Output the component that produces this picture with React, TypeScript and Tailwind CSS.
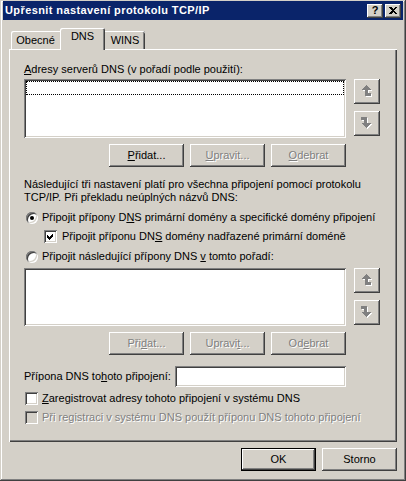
import React from 'react';
import clsx from 'clsx';

const raised = 'shadow-[inset_-1px_-1px_0_#404040,inset_1px_1px_0_#ffffff,inset_-2px_-2px_0_#808080]';
const sunken = 'shadow-[inset_1px_1px_0_#808080,inset_-1px_-1px_0_#ffffff,inset_2px_2px_0_#404040,inset_-2px_-2px_0_#d4d0c8]';
const disabledText = 'text-[#808080] [text-shadow:1px_1px_0_#ffffff]';

const Btn: React.FC<{ children: React.ReactNode; disabled?: boolean; isDefault?: boolean }> = ({
  children,
  disabled,
  isDefault,
}) => (
  <div
    className={clsx(
      'flex items-center justify-center w-[75px] h-[23px] bg-[#d4d0c8]',
      raised,
      isDefault && 'border border-black',
      disabled ? disabledText : 'text-black'
    )}
  >
    <span>{children}</span>
  </div>
);

const upPts = '5,0 10,5 7,5 7,8 10,8 10,11 4,11 4,5 0,5';
const downPts = '5,11 0,6 3,6 3,3 0,3 0,0 6,0 6,6 10,6';

const ArrowBtn: React.FC<{ down?: boolean }> = ({ down }) => (
  <div className={clsx('w-[26px] h-[25px] bg-[#d4d0c8] flex items-center justify-center', raised)}>
    <svg width="12" height="13" viewBox="0 0 12 13" shapeRendering="crispEdges">
      <polygon points={down ? downPts : upPts} fill="#ffffff" transform="translate(1 1)" />
      <polygon points={down ? downPts : upPts} fill="#808080" />
    </svg>
  </div>
);

const ListBox: React.FC<{ h: string; focus?: boolean }> = ({ h, focus }) => (
  <div className={clsx('w-[322px] bg-white p-[2px]', sunken, h)}>
    {focus && <div className="h-[14px] border border-dotted border-black" />}
  </div>
);

const Radio: React.FC<{ checked?: boolean }> = ({ checked }) => (
  <div className={clsx('w-[12px] h-[12px] rounded-full bg-white flex items-center justify-center', sunken)}>
    {checked && <div className="w-[4px] h-[4px] rounded-full bg-black" />}
  </div>
);

const Check: React.FC<{ checked?: boolean; disabled?: boolean }> = ({ checked, disabled }) => (
  <div
    className={clsx(
      'w-[13px] h-[13px] flex items-center justify-center',
      sunken,
      disabled ? 'bg-[#d4d0c8]' : 'bg-white'
    )}
  >
    {checked && (
      <svg width="7" height="7" viewBox="0 0 7 7" shapeRendering="crispEdges">
        <polygon points="0,2 2,4 6,0 6,3 2,7 0,5" fill="#000000" />
      </svg>
    )}
  </div>
);

const App: React.FC = () => {
  return (
    <div className="w-[406px] h-[481px] overflow-hidden bg-[#d4d0c8] pt-[1px] px-[3px] font-['Liberation_Sans',Arial,sans-serif] text-[11px] leading-[13px] text-black shadow-[inset_-1px_-1px_0_#404040,inset_1px_1px_0_#d4d0c8,inset_-2px_-2px_0_#808080,inset_2px_2px_0_#ffffff]">
      {/* title bar */}
      <div className="h-[19px] bg-[#0a246a] flex items-center pl-[2px] pr-[2px]">
        <span className="text-white font-bold tracking-[0.4px] whitespace-nowrap">Upřesnit nastavení protokolu TCP/IP</span>
        <div className="ml-auto flex gap-[2px]">
          <div className={clsx('w-[16px] h-[14px] bg-[#d4d0c8] flex items-center justify-center font-bold text-[11px]', raised)}>
            <span className="leading-[11px] -mt-[1px]">?</span>
          </div>
          <div className={clsx('w-[16px] h-[14px] bg-[#d4d0c8] flex items-center justify-center', raised)}>
            <svg width="8" height="7" viewBox="0 0 8 7" shapeRendering="crispEdges">
              <path d="M0 0h2l2 2 2-2h2L5 3.5 8 7H6L4 5 2 7H0l3-3.5z" fill="#000000" />
            </svg>
          </div>
        </div>
      </div>

      <div className="px-[6px]">
        {/* tabs */}
        <div className="mt-[8px] h-[21px] flex items-end pl-[2px]">
          <div className="w-[49px] h-[18px] pt-[3px] text-center rounded-tl-[2px] shadow-[inset_1px_1px_0_#ffffff]">Obecné</div>
          <div className="relative z-10 w-[45px] h-[22px] -mb-[1px] pt-[2px] text-center bg-[#d4d0c8] rounded-t-[2px] shadow-[inset_1px_1px_0_#ffffff,inset_-1px_0_0_#404040,inset_-2px_0_0_#808080]">
            DNS
          </div>
          <div className="w-[40px] h-[18px] pt-[3px] text-center rounded-tr-[2px] shadow-[inset_0_1px_0_#ffffff,inset_-1px_0_0_#404040,inset_-2px_0_0_#808080]">
            WINS
          </div>
        </div>

        {/* panel */}
        <div className="h-[393px] pl-[15px] pt-[14px] flex flex-col shadow-[inset_1px_1px_0_#ffffff,inset_-1px_-1px_0_#404040,inset_-2px_-2px_0_#808080]">
          <div className="h-[13px] whitespace-nowrap">
            <u>A</u>dresy serverů DNS (v pořadí podle použití):
          </div>

          <div className="mt-[3px] flex">
            <ListBox h="h-[59px]" focus />
            <div className="ml-[8px] flex flex-col gap-[7px]">
              <ArrowBtn />
              <ArrowBtn down />
            </div>
          </div>

          <div className="mt-[6px] w-[322px] flex justify-end gap-[6px]">
            <Btn>
              <u>P</u>řidat...
            </Btn>
            <Btn disabled>
              <u>U</u>pravit...
            </Btn>
            <Btn disabled>
              <u>O</u>debrat
            </Btn>
          </div>

          <div className="mt-[11px] whitespace-nowrap">
            Následující tři nastavení platí pro všechna připojení pomocí protokolu
            <br />
            TCP/IP. Při překladu neúplných názvů DNS:
          </div>

          <div className="mt-[7px] h-[13px] flex items-center whitespace-nowrap">
            <div className="ml-[2px]">
              <Radio checked />
            </div>
            <span className="ml-[4px]">
              Připojit přípony D<u>N</u>S primární domény a specifické domény připojení
            </span>
          </div>

          <div className="mt-[6px] h-[13px] flex items-center whitespace-nowrap pl-[20px]">
            <Check checked />
            <span className="ml-[5px]">
              Připojit příponu DN<u>S</u> domény nadřazené primární doméně
            </span>
          </div>

          <div className="mt-[7px] h-[13px] flex items-center whitespace-nowrap">
            <div className="ml-[2px]">
              <Radio />
            </div>
            <span className="ml-[4px]">
              Připojit následující přípony DNS <u>v</u> tomto pořadí:
            </span>
          </div>

          <div className="mt-[5px] flex">
            <ListBox h="h-[58px]" />
            <div className="ml-[8px] flex flex-col gap-[7px]">
              <ArrowBtn />
              <ArrowBtn down />
            </div>
          </div>

          <div className="mt-[6px] w-[322px] flex justify-end gap-[6px]">
            <Btn disabled>
              Při<u>d</u>at...
            </Btn>
            <Btn disabled>
              Upravi<u>t</u>...
            </Btn>
            <Btn disabled>
              Od<u>e</u>brat
            </Btn>
          </div>

          <div className="mt-[11px] w-[322px] flex items-center">
            <span className="whitespace-nowrap">
              Přípona DNS to<u>h</u>oto připojení:
            </span>
            <div className={clsx('ml-auto w-[171px] h-[21px] bg-white', sunken)} />
          </div>

          <div className="mt-[5px] h-[13px] flex items-center whitespace-nowrap pl-[1px]">
            <Check />
            <span className="ml-[4px]">
              <u>Z</u>aregistrovat adresy tohoto připojení v systému DNS
            </span>
          </div>

          <div className="mt-[6px] h-[13px] flex items-center whitespace-nowrap pl-[1px]">
            <Check disabled />
            <span className={clsx('ml-[4px]', disabledText)}>
              Při registraci v systému DNS použít příponu DNS tohoto připojení
            </span>
          </div>
        </div>

        {/* footer */}
        <div className="mt-[6px] flex justify-end gap-[6px]">
          <Btn isDefault>OK</Btn>
          <Btn>Storno</Btn>
        </div>
      </div>
    </div>
  );
};

export default App;
